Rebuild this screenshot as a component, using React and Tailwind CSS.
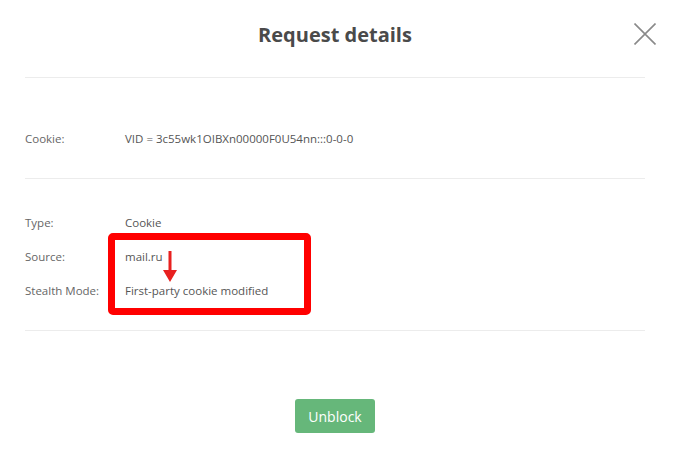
export default function App() {
  const font = { fontFamily: '"Open Sans", "Noto Sans", sans-serif' };

  return (
    <div className="min-h-[465px] w-[676px] bg-white" style={font}>
      <div className="ml-[25px] w-[620px]">
        {/* HEADER */}
        <div className="relative flex h-[77px] items-start justify-center pt-[21px]">
          <h1 className="text-[20px] font-bold leading-[28px] text-[#4a4a4a]">Request details</h1>
          <button className="absolute right-[-11px] top-[23px] h-[22px] w-[22px]">
            <svg viewBox="0 0 22 22" width="22" height="22">
              <path d="M0.5 0.5 L21.5 21.5 M21.5 0.5 L0.5 21.5" stroke="#8a8a8a" strokeWidth="1.6" fill="none" />
            </svg>
          </button>
        </div>

        {/* COOKIE */}
        <div className="border-t border-[#ececec] pt-[51px] pb-[29px]">
          <div className="flex h-[20px] items-center text-[11.5px]">
            <span className="w-[100px] text-[#666]">Cookie:</span>
            <span className="text-[#555]">VID = 3c55wk1OIBXn00000F0U54nn:::0-0-0</span>
          </div>
        </div>

        {/* DETAILS */}
        <div className="relative border-t border-[#ececec] pt-[34px] pb-[29px]">
          <div className="flex flex-col gap-[14px] text-[11.5px]">
            <div className="flex h-[20px] items-center">
              <span className="w-[100px] text-[#666]">Type:</span>
              <span className="text-[#555]">Cookie</span>
            </div>
            <div className="flex h-[20px] items-center">
              <span className="w-[100px] text-[#666]">Source:</span>
              <span className="text-[#555]">mail.ru</span>
            </div>
            <div className="flex h-[20px] items-center">
              <span className="w-[100px] text-[#666]">Stealth Mode:</span>
              <span className="text-[#555]">First-party cookie modified</span>
            </div>
          </div>

          {/* highlight */}
          <div className="absolute left-[83px] top-[54px] h-[82px] w-[203px] rounded-[5px] border-[7px] border-[#ff0000]" />
          <svg className="absolute left-[138px] top-[72px]" width="14" height="31" viewBox="0 0 14 31">
            <path d="M5.5 0 H8.5 V19 H14 L7 31 L0 19 H5.5 Z" fill="#e8201f" />
          </svg>
        </div>

        {/* FOOTER */}
        <div className="flex justify-center border-t border-[#ececec] pt-[68px]">
          <button className="h-[34px] w-[80px] rounded-[3px] bg-[#66b77a] text-[14px] text-white">
            Unblock
          </button>
        </div>
      </div>
    </div>
  );
}
